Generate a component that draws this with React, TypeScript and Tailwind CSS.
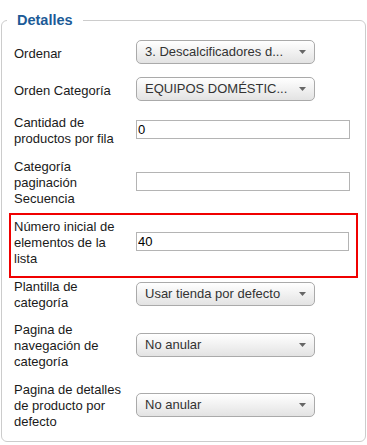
import React from 'react';

const font = "font-['Liberation_Sans',Arial,sans-serif]";

const Select: React.FC<{ value: string }> = ({ value }) => (
  <div className="mb-[3px] flex h-[24px] w-[179px] shrink-0 items-center justify-between rounded-[5px] border border-[#aaaaaa] bg-linear-to-b from-white to-[#e3e3e3] pl-[8px] pr-[8px] text-[13px] text-[#333]">
    <span className="whitespace-nowrap">{value}</span>
    <svg width="7" height="4" viewBox="0 0 7 4" className="shrink-0">
      <polygon points="0,0 7,0 3.5,4" fill="#666" />
    </svg>
  </div>
);

const TextInput: React.FC<{ value: string; w?: string }> = ({ value, w = 'w-[214px]' }) => (
  <input
    readOnly
    value={value}
    className={`mb-[4px] h-[19px] ${w} shrink-0 border border-[#b4b4b4] bg-white px-[1px] text-[13px] leading-[17px] text-black outline-none`}
  />
);

const Row: React.FC<{ label: React.ReactNode; children: React.ReactNode; className?: string }> = ({ label, children, className = '' }) => (
  <div className={`flex items-center pl-[5px] ${className}`}>
    <div className="w-[112px] shrink-0 text-[13px] leading-[16px] text-[#1a1a1a]">{label}</div>
    <div className="ml-[10px] flex">{children}</div>
  </div>
);

export default function App() {
  return (
    <div className={`min-h-screen bg-white pt-[12px] ${font}`}>
      <fieldset className="mx-[1px] rounded-[6px] border border-[#cccccc]">
        <legend className="ml-[5px] px-[10px] text-[14.5px] font-bold leading-[17px] text-[#1c5b97]">Detalles</legend>
        <div className="px-[7px] pb-[11px] pt-[11px]">
          <Row label="Ordenar" className="h-[27px]">
            <Select value="3. Descalcificadores d..." />
          </Row>
          <Row label="Orden Categoría" className="mt-[10px] h-[27px]">
            <Select value="EQUIPOS DOMÉSTIC..." />
          </Row>
          <Row label="Cantidad de productos por fila" className="mt-[11px]">
            <TextInput value="0" />
          </Row>
          <Row label="Categoría paginación Secuencia" className="mt-[12px]">
            <TextInput value="" />
          </Row>
          <div className="mt-[6px] flex items-center border-2 border-[#f00000] pb-[9px] pl-[3px] pt-[4px]">
            <div className="w-[112px] shrink-0 text-[13px] leading-[16px] text-[#1a1a1a]">Número inicial de elementos de la lista</div>
            <div className="ml-[10px] flex">
              <TextInput value="40" w="w-[213px]" />
            </div>
          </div>
          <Row label="Plantilla de categoría" className="mt-[1px]">
            <Select value="Usar tienda por defecto" />
          </Row>
          <Row label="Pagina de navegación de categoría" className="mt-[11px]">
            <Select value="No anular" />
          </Row>
          <Row label="Pagina de detalles de producto por defecto" className="mt-[12px]">
            <Select value="No anular" />
          </Row>
        </div>
      </fieldset>
    </div>
  );
}
